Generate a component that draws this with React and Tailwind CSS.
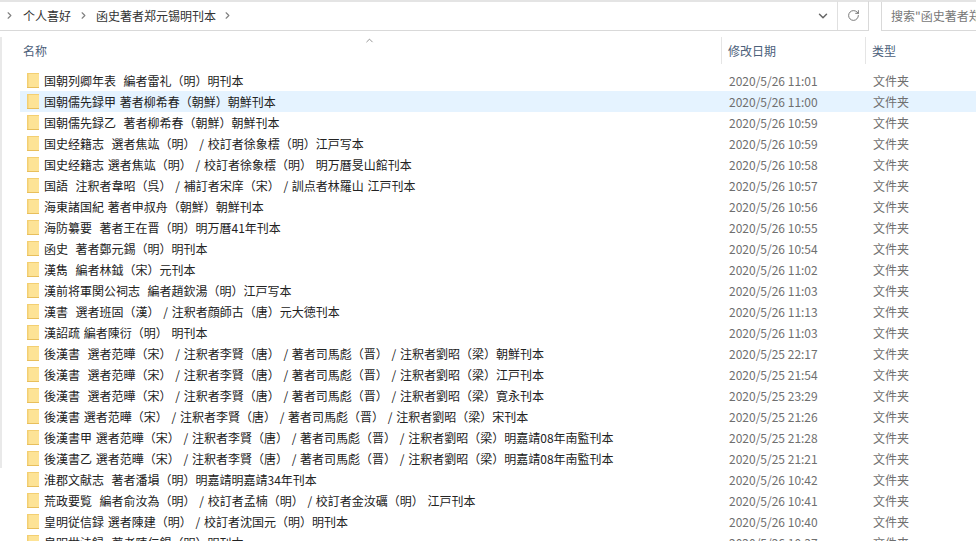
import React from "react";
import { ChevronRight, ChevronDown, ChevronUp, RotateCw } from "lucide-react";

const FONT = "font-['Noto_Sans_CJK_SC','Noto_Sans',sans-serif]";

const files = [
  ["国朝列卿年表  編者雷礼（明）明刊本", "2020/5/26 11:01"],
  ["国朝儒先録甲 著者柳希春（朝鮮）朝鮮刊本", "2020/5/26 11:00"],
  ["国朝儒先録乙  著者柳希春（朝鮮）朝鮮刊本", "2020/5/26 10:59"],
  ["国史经籍志  選者焦竑（明） / 校訂者徐象橒（明）江戸写本", "2020/5/26 10:59"],
  ["国史经籍志 選者焦竑（明） / 校訂者徐象橒（明） 明万曆旻山館刊本", "2020/5/26 10:58"],
  ["国語  注釈者韋昭（呉） / 補訂者宋庠（宋） / 訓点者林羅山 江戸刊本", "2020/5/26 10:57"],
  ["海東諸国紀 著者申叔舟（朝鮮）朝鮮刊本", "2020/5/26 10:56"],
  ["海防纂要  著者王在晋（明）明万曆41年刊本", "2020/5/26 10:55"],
  ["函史  著者鄭元錫（明）明刊本", "2020/5/26 10:54"],
  ["漢雋  編者林鉞（宋）元刊本", "2020/5/26 11:02"],
  ["漢前将軍関公祠志  編者趙欽湯（明）江戸写本", "2020/5/26 11:03"],
  ["漢書  選者班固（漢） / 注釈者顔師古（唐）元大徳刊本", "2020/5/26 11:13"],
  ["漢詔疏 編者陳衍（明） 明刊本", "2020/5/26 11:03"],
  ["後漢書  選者范曄（宋） / 注釈者李賢（唐） / 著者司馬彪（晋） / 注釈者劉昭（梁）朝鮮刊本", "2020/5/25 22:17"],
  ["後漢書  選者范曄（宋） / 注釈者李賢（唐） / 著者司馬彪（晋） / 注釈者劉昭（梁）江戸刊本", "2020/5/25 21:54"],
  ["後漢書  選者范曄（宋） / 注釈者李賢（唐） / 著者司馬彪（晋） / 注釈者劉昭（梁）寛永刊本", "2020/5/25 23:29"],
  ["後漢書 選者范曄（宋） / 注釈者李賢（唐） / 著者司馬彪（晋） / 注釈者劉昭（梁）宋刊本", "2020/5/25 21:26"],
  ["後漢書甲 選者范曄（宋） / 注釈者李賢（唐） / 著者司馬彪（晋） / 注釈者劉昭（梁）明嘉靖08年南監刊本", "2020/5/25 21:28"],
  ["後漢書乙 選者范曄（宋） / 注釈者李賢（唐） / 著者司馬彪（晋） / 注釈者劉昭（梁）明嘉靖08年南監刊本", "2020/5/25 21:21"],
  ["淮郡文献志  著者潘塤（明）明嘉靖明嘉靖34年刊本", "2020/5/26 10:42"],
  ["荒政要覧  編者俞汝為（明） / 校訂者孟楠（明） / 校訂者金汝礪（明） 江戸刊本", "2020/5/26 10:41"],
  ["皇明従信録 選者陳建（明） / 校訂者沈国元（明）明刊本", "2020/5/26 10:40"],
  ["皇明世法録  著者陳仁錫（明）明刊本", "2020/5/26 10:37"],
];

const FolderIcon = () => (
  <svg width="12" height="15" viewBox="0 0 12 15" className="shrink-0">
    <rect x="0" y="0" width="12" height="15" fill="#f3cf72" />
    <rect x="1.5" y="1" width="10.5" height="13" fill="#fde396" />
    <rect x="0" y="14" width="12" height="1" fill="#e8bf5c" />
  </svg>
);

const Row = ({ name, date, selected }) => (
  <div className={`flex h-[21px] shrink-0 items-center pl-[7px] ${selected ? "bg-[#e5f3ff]" : ""}`}>
    <FolderIcon />
    <div className="ml-[5px] w-[685px] truncate whitespace-pre text-xs leading-[21px] text-[#222222] [word-spacing:1.05px]">{name}</div>
    <div className="w-[144px] text-xs leading-[21px] text-[#6f6f6f]">{date}</div>
    <div className="text-xs leading-[21px] text-[#6f6f6f]">文件夹</div>
  </div>
);

export default function App() {
  return (
    <div className={`flex h-[541px] w-[976px] flex-col overflow-hidden bg-white ${FONT}`}>
      {/* address bar */}
      <div className="flex h-[31px] shrink-0 border-t-2 border-[#e4e4e4]">
        <div className="flex w-[869px] items-center whitespace-nowrap border-b border-[#d9d9d9] pb-[1px] text-xs text-[#333333]">
          <ChevronRight size={11} strokeWidth={2.5} className="ml-[4px] shrink-0 text-[#808080]" />
          <span className="ml-[8px] shrink-0">个人喜好</span>
          <ChevronRight size={11} strokeWidth={2.5} className="ml-[7px] shrink-0 text-[#808080]" />
          <span className="ml-[7px] shrink-0">函史著者郑元锡明刊本</span>
          <ChevronRight size={11} strokeWidth={2.5} className="ml-[6px] shrink-0 text-[#808080]" />
          <ChevronDown size={14} strokeWidth={2.5} className="ml-[583px] shrink-0 text-[#666666]" />
          <div className="ml-[7px] h-[29px] w-px shrink-0 bg-[#e0e0e0]" />
          <RotateCw size={13} strokeWidth={1.6} className="ml-[9px] shrink-0 text-[#666666]" />
          <div className="ml-[8px] h-[29px] w-px shrink-0 bg-[#d9d9d9]" />
        </div>
        <div className="ml-[12px] flex flex-1 items-center overflow-hidden border-b border-l border-[#d9d9d9] pb-[1px] pl-[9px]">
          <span className="whitespace-nowrap text-xs text-[#777777]">搜索"函史著者郑元锡明刊本"</span>
        </div>
      </div>

      <div className="flex min-h-0 flex-1">
        {/* nav pane scrollbar edge */}
        <div className="mt-[6px] h-[431px] w-[2px] shrink-0 bg-[#e9e9e9]" />

        <div className="flex min-w-0 flex-1 flex-col pl-[18px]">
          {/* column headers */}
          <div className="flex h-[39px] shrink-0 text-xs text-[#4c607a]">
            <div className="relative my-[6px] flex w-[702px] items-center border-r border-[#e5e5e5] pl-[3px]">
              <span>名称</span>
              <ChevronUp size={11} strokeWidth={1.5} className="absolute left-[344px] -top-[2px] text-[#666666]" />
            </div>
            <div className="my-[6px] flex w-[144px] items-center border-r border-[#e5e5e5] pl-[6px]">
              <span>修改日期</span>
            </div>
            <div className="my-[6px] flex items-center pl-[6px]">
              <span>类型</span>
            </div>
          </div>

          {files.map(([name, date], i) => (
            <Row key={i} name={name} date={date} selected={i === 1} />
          ))}
        </div>
      </div>
    </div>
  );
}
